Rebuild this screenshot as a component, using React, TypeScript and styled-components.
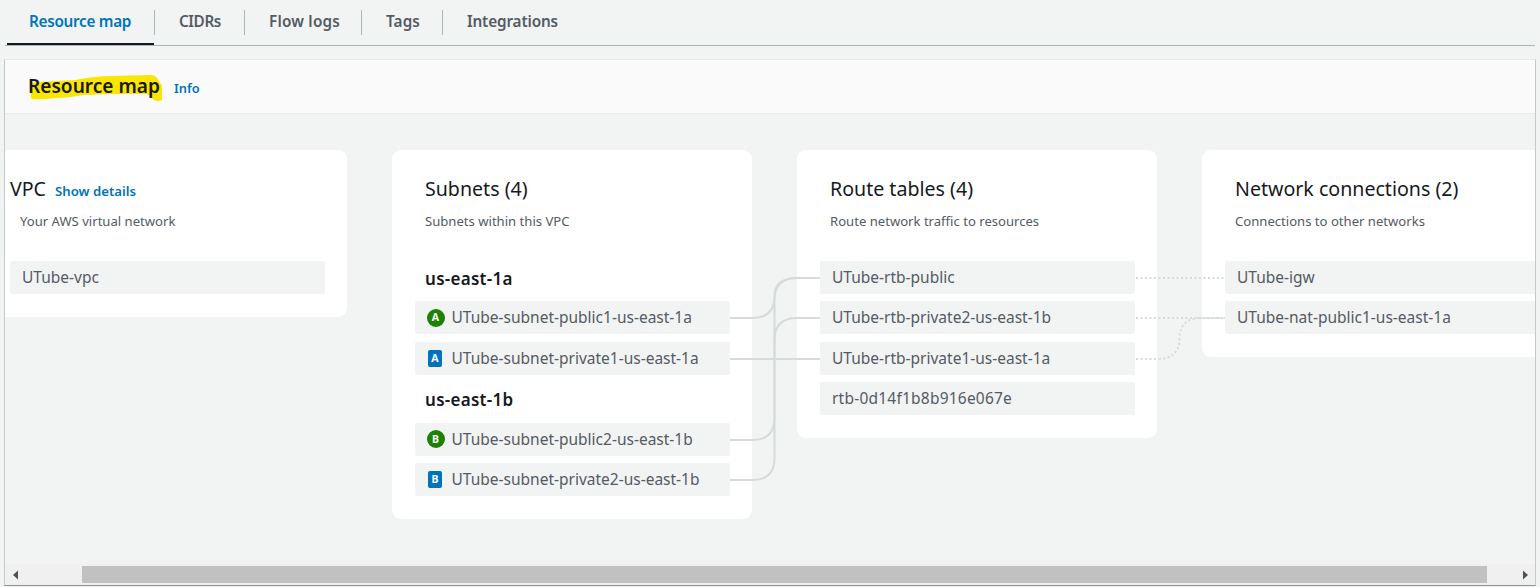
import React from "react";
import styled, { createGlobalStyle } from "styled-components";

const GlobalStyle = createGlobalStyle`
  *, *::before, *::after { box-sizing: border-box; }
  body {
    margin: 0;
    background: #f2f3f3;
    color: #16191f;
    font-family: "Noto Sans", "Open Sans", sans-serif;
    overflow: hidden;
  }
  h2, h3, h4, p, ul { margin: 0; padding: 0; font-weight: 400; }
  button { border: 0; background: none; padding: 0; margin: 0; font: inherit; text-align: left; }
`;

const Page = styled.div`
  display: flex;
  flex-direction: column;
  height: 587px;
  padding: 0 4px 1px;
`;

const TabBar = styled.nav`
  display: flex;
  height: 46px;
  flex: none;
  margin: 0 1px;
  padding-left: 2px;
  border-bottom: 1px solid #aab7b8;
`;

const Tab = styled.button<{ $width: number; $active?: boolean; $tracking: number }>`
  display: flex;
  width: ${(p) => p.$width}px;
  height: 45px;
  padding-left: ${(p) => (p.$active ? 22 : 24)}px;
  border-bottom: ${(p) => (p.$active ? "2px solid #16191f" : "0")};
  color: ${(p) => (p.$active ? "#0073bb" : "#545b64")};
  font-size: 15.3px;
  font-weight: 600;
  line-height: 43px;
  letter-spacing: ${(p) => p.$tracking}px;
  white-space: nowrap;
`;

const TabDivider = styled.span`
  width: 1px;
  height: 25px;
  margin-top: 10px;
  background: #aab7b8;
`;

const Panel = styled.section`
  display: flex;
  flex-direction: column;
  flex: 1;
  min-height: 0;
  margin-top: 13px;
  border: 1px solid #c3c9ca;
  border-top-color: #e6e9e9;
  border-bottom-color: #879596;
`;

const PanelHeader = styled.header`
  display: flex;
  align-items: center;
  height: 54px;
  flex: none;
  padding: 0 23px 1px;
  border-bottom: 1px solid #eaeded;
  background: #fafafa;
`;

const Marked = styled.div`
  position: relative;
  width: 146px;
`;

const Highlighter = styled.svg`
  position: absolute;
  left: 0;
  top: 0;
`;

const PanelTitle = styled.h2`
  position: relative;
  font-size: 19.1px;
  font-weight: 600;
  line-height: 28px;
  white-space: nowrap;
`;

const InfoLink = styled.a`
  padding-top: 3px;
  color: #0073bb;
  font-size: 12.8px;
  font-weight: 600;
  line-height: 20px;
`;

const Viewport = styled.div`
  flex: 1;
  min-height: 0;
  overflow: hidden;
`;

const MapCanvas = styled.div`
  position: relative;
  display: flex;
  align-items: flex-start;
  gap: 45px;
  width: 1575px;
  margin-left: -18px;
  padding-top: 36px;
`;

const Card = styled.article`
  width: 360px;
  flex: none;
  padding: 0 22px 23px 23px;
  border-radius: 9px;
  background: #fff;
`;

const CardHead = styled.div<{ $flush?: boolean }>`
  height: 111px;
  padding: 25px 0 0 ${(p) => (p.$flush ? 0 : 10)}px;
`;

const TitleRow = styled.div`
  display: flex;
  align-items: baseline;
  gap: 9px;
`;

const CardTitle = styled.h3`
  font-size: 19.6px;
  line-height: 28px;
  white-space: nowrap;
`;

const DetailsLink = styled.a`
  color: #0073bb;
  font-size: 13.2px;
  font-weight: 600;
`;

const CardNote = styled.p<{ $indent?: boolean }>`
  margin-top: 8px;
  padding-left: ${(p) => (p.$indent ? 10 : 0)}px;
  color: #545b64;
  font-size: 13.1px;
  line-height: 20px;
`;

const List = styled.div`
  display: flex;
  flex-direction: column;
  gap: 7.4px;
`;

const Zone = styled.h4`
  height: 33px;
  padding: 1px 0 0 10px;
  font-size: 17px;
  font-weight: 600;
  line-height: 33px;
  letter-spacing: 0.28px;
`;

const Resource = styled.div<{ $tracking?: number }>`
  display: flex;
  align-items: center;
  height: 33px;
  padding-left: 12px;
  border-radius: 2px;
  background: #f2f3f3;
  color: #545b64;
  font-size: 15.5px;
  line-height: 33px;
  letter-spacing: ${(p) => p.$tracking ?? 0}px;
  white-space: nowrap;
`;

const Badge = styled.span<{ $public: boolean }>`
  display: flex;
  align-items: center;
  justify-content: center;
  width: ${(p) => (p.$public ? 18 : 14)}px;
  height: ${(p) => (p.$public ? 18 : 17)}px;
  margin: ${(p) => (p.$public ? "0 6.5px 0 0" : "0 9.5px 0 1px")};
  padding-right: ${(p) => (p.$public ? 1 : 0)}px;
  border-radius: ${(p) => (p.$public ? "50%" : "2px")};
  background: ${(p) => (p.$public ? "#1d8102" : "#0073bb")};
  color: #fff;
  font-size: 10.5px;
  font-weight: 700;
  line-height: 17px;
`;

const Connectors = styled.svg`
  position: absolute;
  left: 13px;
  top: 0;
  pointer-events: none;
`;

const ScrollBar = styled.div`
  display: flex;
  align-items: center;
  justify-content: space-between;
  height: 21px;
  flex: none;
  padding: 0 7px 0 8px;
  background: #f0f0f0;
`;

const ScrollThumb = styled.div`
  width: 1405px;
  height: 17px;
  margin: 0 auto 0 64px;
  background: #c1c1c1;
`;

const tabs = [
  { label: "Resource map", width: 147, tracking: -0.3 },
  { label: "CIDRs", width: 89, tracking: -0.4 },
  { label: "Flow logs", width: 116, tracking: 0.2 },
  { label: "Tags", width: 80, tracking: 0.1 },
  { label: "Integrations", width: 140, tracking: -0.15 },
];

const zones = [
  { name: "us-east-1a", letter: "A", subnets: ["UTube-subnet-public1-us-east-1a", "UTube-subnet-private1-us-east-1a"] },
  { name: "us-east-1b", letter: "B", subnets: ["UTube-subnet-public2-us-east-1b", "UTube-subnet-private2-us-east-1b"] },
];

const routeTables = [
  { name: "UTube-rtb-public" },
  { name: "UTube-rtb-private2-us-east-1b" },
  { name: "UTube-rtb-private1-us-east-1a" },
  { name: "rtb-0d14f1b8b916e067e", tracking: 0.22 },
];

const solidLinks = [
  "M725 204 H747 Q769.5 204 769.5 182 Q770 164 792 164 H815",
  "M725 245 H815",
  "M725 326 H747 Q769.5 326 769.5 304 V186 Q769.5 164 792 164 H815",
  "M725 366 H747 Q769.5 366 769.5 344 V226 Q769.5 204 792 204 H815",
];

const dottedLinks = [
  "M1131 164 H1220",
  "M1131 204 H1220",
  "M1131 245 H1152 Q1174.5 245 1174.5 224.5 Q1174.5 204 1197 204 H1220",
];

export default function App() {
  return (
    <Page>
      <GlobalStyle />
      <TabBar>
        {tabs.map((tab, i) => (
          <React.Fragment key={tab.label}>
            {i > 0 && <TabDivider />}
            <Tab $width={tab.width} $tracking={tab.tracking} $active={i === 0}>
              {tab.label}
            </Tab>
          </React.Fragment>
        ))}
      </TabBar>
      <Panel>
        <PanelHeader>
          <Marked>
            <Highlighter width="140" height="36" viewBox="0 0 140 36">
              <path
                fill="#fbe600"
                d="M2 13 Q4 10 10 10 L48 8 Q65 4 85 4 L122 3 Q127 3 129 6 L132 11 Q134 12 134 15 V28 Q130 30 126 28 L119 22 L88 22 L55 23 Q40 26 28 26 Q14 28 4 27 Q2 26 3 24 Z"
              />
            </Highlighter>
            <PanelTitle>Resource map</PanelTitle>
          </Marked>
          <InfoLink>Info</InfoLink>
        </PanelHeader>
        <Viewport>
          <MapCanvas>
            <Card>
              <CardHead $flush>
                <TitleRow>
                  <CardTitle>VPC</CardTitle>
                  <DetailsLink>Show details</DetailsLink>
                </TitleRow>
                <CardNote $indent>Your AWS virtual network</CardNote>
              </CardHead>
              <List>
                <Resource>UTube-vpc</Resource>
              </List>
            </Card>
            <Card>
              <CardHead>
                <CardTitle>Subnets (4)</CardTitle>
                <CardNote>Subnets within this VPC</CardNote>
              </CardHead>
              <List>
                {zones.map((zone) => (
                  <React.Fragment key={zone.name}>
                    <Zone>{zone.name}</Zone>
                    {zone.subnets.map((name, i) => (
                      <Resource key={name}>
                        <Badge $public={i === 0}>{zone.letter}</Badge>
                        {name}
                      </Resource>
                    ))}
                  </React.Fragment>
                ))}
              </List>
            </Card>
            <Card>
              <CardHead>
                <CardTitle>Route tables (4)</CardTitle>
                <CardNote>Route network traffic to resources</CardNote>
              </CardHead>
              <List>
                {routeTables.map((table) => (
                  <Resource key={table.name} $tracking={table.tracking}>
                    {table.name}
                  </Resource>
                ))}
              </List>
            </Card>
            <Card>
              <CardHead>
                <CardTitle>Network connections (2)</CardTitle>
                <CardNote>Connections to other networks</CardNote>
              </CardHead>
              <List>
                <Resource>UTube-igw</Resource>
                <Resource>UTube-nat-public1-us-east-1a</Resource>
              </List>
            </Card>
            <Connectors width="1530" height="420" viewBox="-5 0 1530 420" fill="none" stroke="#d5dbdb" strokeWidth="2">
              {solidLinks.map((d) => (
                <path key={d} d={d} />
              ))}
              {dottedLinks.map((d) => (
                <path key={d} d={d} strokeDasharray="2 2.5" />
              ))}
            </Connectors>
          </MapCanvas>
        </Viewport>
        <ScrollBar>
          <svg width="5" height="10" viewBox="0 0 5 10">
            <path d="M5 0.5 V9.5 L0 5 Z" fill="#505050" />
          </svg>
          <ScrollThumb />
          <svg width="5" height="10" viewBox="0 0 5 10">
            <path d="M0 0.5 V9.5 L5 5 Z" fill="#505050" />
          </svg>
        </ScrollBar>
      </Panel>
    </Page>
  );
}
